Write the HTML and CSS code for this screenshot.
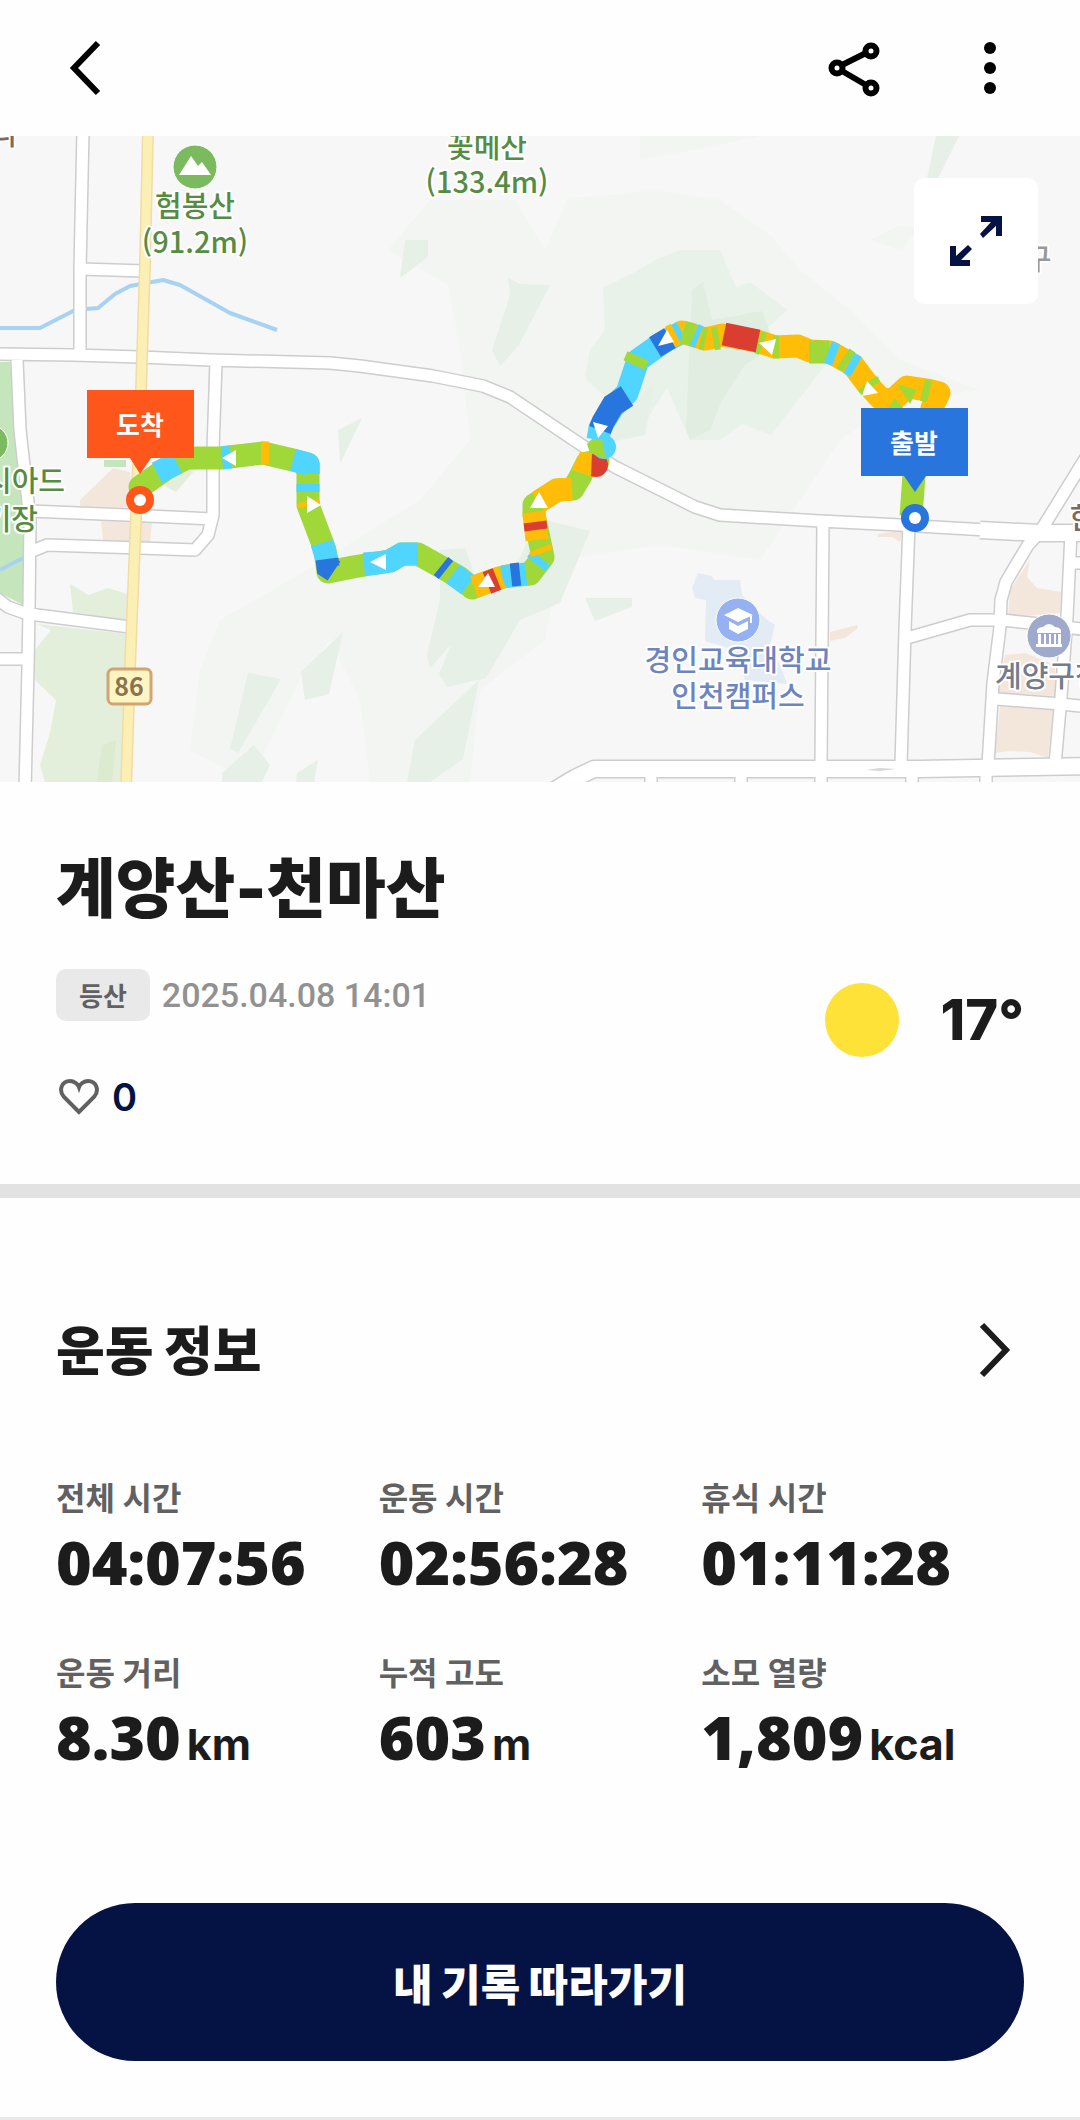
FILE: index.html
```html
<!DOCTYPE html>
<html lang="ko">
<head>
<meta charset="utf-8">
<meta name="viewport" content="width=device-width, initial-scale=1">
<title>계양산-천마산</title>
<link rel="stylesheet" href="styles.css">
</head>
<body>
<header class="topbar">
  <button class="icon-button" type="button" aria-label="뒤로">
    <svg width="60" height="60" viewBox="0 0 60 60"><path class="chevron" d="M44 5 20 30 44 55"/></svg>
  </button>
  <div class="topbar-actions">
    <button class="icon-button" type="button" aria-label="공유">
      <svg width="60" height="60" viewBox="0 0 60 60"><g class="share"><path d="M18 27 42 15M18 33 42 47"/><circle cx="13" cy="30" r="5.5"/><circle cx="47" cy="13" r="5.5"/><circle cx="47" cy="50" r="5.5"/></g></svg>
    </button>
    <button class="icon-button" type="button" aria-label="더보기">
      <svg width="60" height="60" viewBox="0 0 60 60"><circle cx="30" cy="10" r="6"/><circle cx="30" cy="30" r="6"/><circle cx="30" cy="50" r="6"/></svg>
    </button>
  </div>
</header>

<main>
  <section class="map" aria-label="이동 경로 지도">
    <svg class="map-canvas" viewBox="0 136 1080 646">
      <rect class="land" y="136" width="1080" height="646"/>
      <!-- hills -->
      <g class="hill-1">
        <path d="M430 200 515 200 545 250 568 198 615 195 655 190 720 200 770 235 800 270 850 310 900 360 980 390 900 400 870 420 840 440 760 560 660 545 560 560 545 640 480 690 470 782 370 782 360 700 330 640 300 680 250 782 190 750 200 670 220 620 290 580 420 500 470 440 460 350 448 285 388 250Z"/>
        <path d="M640 160 720 145 760 136 640 136ZM870 240 900 225 920 228 900 250Z"/>
      </g>
      <g class="hill-2">
        <path class="hill-soft" d="M603 288 635 272 655 260 680 250 720 250 736 287 750 282 787 310 765 330 826 364 771 435 742 424 720 440 690 440 667 388 640 430 585 378 590 350 605 330Z"/>
        <path d="M936 136 959 136 938 178 927 178Z"/>
        <path d="M440 550 465 548 480 590 476 620 455 640 430 668 427 655 440 600Z"/>
        <path d="M405 240 428 240 428 257 400 278ZM508 278 520 284 550 285 519 345 500 366 492 350 510 295ZM585 447 645 435 655 382 625 410Z"/>
        <path d="M538 518 590 531 560 603 520 620 486 678 447 687 439 674 462 618 470 600 505 590ZM479 680 463 759 430 782 407 782 415 740ZM585 598 632 598 632 607 595 621Z"/>
        <path d="M248 673 281 679 238 753 230 749ZM343 632 329 694 305 700 301 672ZM254 745 270 765 262 782 222 782 222 773ZM318 760 314 782 296 782 297 773ZM338 430 362 418 340 464Z"/>
      </g>
      <path class="hill-3" d="M692 290 703 282 712 320 762 311 775 346 745 365 722 400 710 430 690 440 686 430Z"/>
      <!-- parks and districts -->
      <path class="park" d="M0 362H12L16 430 23 480 23 605 0 593ZM104 460H126V467H104Z"/>
      <path class="meadow" d="M35 650 51 630 37 624 127 634 121 782 45 782 40 765 50 733 56 700 35 680ZM70 584 88 595 108 588 127 594 127 622 73 612ZM163 485 190 464 200 464 176 492Z"/>
      <path class="meadow-dark" d="M102 745 116 740 112 782 97 782Z"/>
      <path class="campus" d="M692 588 698 573 712 576 714 580H740L742 595 765 618 775 625 770 645 780 665 787 684 745 680 735 650 705 641 706 600 695 598Z"/>
      <path class="district" d="M80 500 113 468 130 472 133 508 80 506ZM101 521 152 523 150 542 103 540ZM1030 560 1027 577 1037 588 1061 592 1060 613 1008 617 1010 590ZM1000 706 1053 710 1048 758 1030 752 1010 751 995 753ZM1005 655 1025 653 1055 665 1055 696 998 693ZM878 534 903 530 900 542 892 537 878 537ZM830 632 845 628 857 625 858 628 845 638 830 641Z"/>
      <!-- river -->
      <path class="river" d="M0 328H40L75 310 98 308 115 294 130 286 163 280 180 285 230 313 277 330M0 570 23 558"/>
      <!-- roads: casing first, then surface -->
      <defs>
        <path id="roads" d="M83 130 80 270V355M81 269 145 271M0 354 73 355 140 357 210 360 330 363 360 366 433 376 483 386 510 397 583 446 615 467 695 507 720 515 820 521 900 525 987 530M17 360 20 430 30 520 29 610 28 667 25 790M216 362 213 450V515L208 535 195 550 140 548 47 545 30 552M30 511 127 515 213 519M-5 597 8 607 22 612 37 615 130 627M-5 659H28M823 522 821 765M909 525 905 630 901 765M907 638 970 620H1003L1030 623 1090 630M1093 446 1040 532 1028 545 1006 582 1001 600 1000 627 993 683 988 765M1071 533 1067 617 1061 697 1055 765M997 699 1061 704 1090 707M1074 563H1090M651 769V790M741 769V790M821 769V790M912 769V790M986 769V790"/>
        <path id="wide-roads" d="M980 530 1040 533 1090 533M545 796 575 778 594 769 860 769 920 769 1090 766"/>
      </defs>
      <use class="road-case" href="#roads"/><use class="road-case wide" href="#wide-roads"/>
      <use class="road" href="#roads"/><use class="road wide" href="#wide-roads"/>
      <path class="median" d="M866 770 880 768 896 769 880 771Z"/>
      <path class="highway-case" d="M148 130 145 263 141 390 136 517 130 667 126 790"/>
      <path class="highway" d="M148 130 145 263 141 390 136 517 130 667 126 790"/>
      <rect class="shield" x="108" y="669" width="43" height="35" rx="5"/>
      <text class="shield-text" x="129" y="696">86</text>
      <!-- places -->
      <circle class="peak" cx="195" cy="167" r="22"/>
      <path class="glyph" d="M179 175 191 156 198 166 202 162 211 175Z"/>
      <circle class="peak" cx="-10" cy="443" r="18"/>
      <circle class="school" cx="738" cy="620" r="22"/>
      <path class="glyph" d="M724 615 738 608 753 615 738 622ZM729 621 738 626 748 621V629L738 634 729 629ZM750 616H752V623H750Z"/>
      <circle class="office" cx="1049" cy="636" r="22"/>
      <path class="glyph" d="M1037 630Q1039 627 1043 627 1049 621 1055 627 1059 627 1061 630V633H1037ZM1038 634H1041V644H1038ZM1044 634H1046V644H1044ZM1049 634H1051V644H1049ZM1054 634H1056V644H1054ZM1058 634H1061V644H1058ZM1036 644H1062V647H1036Z"/>
      <g class="place green"><text x="195" y="217">험봉산</text><text x="195" y="253">(91.2m)</text><text x="487" y="158">꽃메산</text><text x="487" y="193">(133.4m)</text></g>
      <g class="place green end"><text x="65" y="492">아시아드</text><text x="38" y="530">경기장</text></g>
      <g class="place blue"><text x="738" y="671">경인교육대학교</text><text x="738" y="707">인천캠퍼스</text></g>
      <g class="place slate start"><text x="995" y="687">계양구청</text></g>
      <g class="place brown"><text x="5" y="145">다</text><text x="1083" y="529">한</text></g>
      <text class="place gray" x="1038" y="270">구</text>
      <!-- recorded track, coloured by pace -->
      <g class="track">
        <path class="g" stroke-linejoin="round" stroke-linecap="round" d="M140 487 150 480 167 468 187 458 220 458 263 453 293 460 308 464 308 505 325 550 328 572 353 567 377 563 390 561 402 554 418 554 443 568 460 578 472 588 493 580 507 576 530 574 543 557 534 515 534 505 557 490 573 489 580 477 587 463 598 461"/>
        <path class="o" stroke-linejoin="round" stroke-linecap="round" d="M682 332 705 339 723 335 757 341 775 347 798 346 810 351 830 352 853 365 868 385 881 399 893 400 907 387 927 390 939 393 932 408"/>
        <path class="c" d="M157 473 177 463M222 458 231 457M308 474V462M308 484V492M322 543 327 560M364 564 377 563 390 561 402 554 418 554M453 574 468 585M502 577 526 574M536 564 541 558"/>
        <path class="c" stroke-linejoin="round" d="M293 460 308 464 308 474"/>
        <path class="b" d="M327 559 328 567 334 571M441 566 446 570M511 575 520 574"/>
        <path class="o" d="M261 453 269 453M308 501 309 506M474 587 502 577M542 553 540 548M537 540 534 512M538 502 557 490 572 489M583 472 588 463"/>
        <path class="r" d="M487 583 497 579M536 530 535 522"/>
        <circle class="dot-r" cx="596" cy="465" r="12"/><path class="fill-o" d="M572 470 580 452 592 453 591 476Z"/>
        <path class="c" stroke-linejoin="round" d="M598 440 600 428 613 407 627 393 638 360 662 343 682 332"/>
        <circle class="dot-c" cx="604" cy="447" r="12"/><path class="fill-g" d="M587 444 592 439 602 439 606 459 590 453Z"/>
        <path class="b" d="M600 430 603 422 613 405 627 396M655 347 670 338"/>
        <path class="g" d="M634 365 638 356M683 332 694 335M701 338 706 339M713 339 719 338M758 342 763 344M773 347 779 347M809 352 829 352M843 358 849 362M867 383 871 388M932 379"/>
        <path class="o" d="M670 337 676 334"/>
        <path class="c" d="M828 352 836 355M849 363 856 367M694 335 699 337"/>
        <path class="r" d="M724 334 758 341"/>
        <path class="fill-g" d="M897 384 917 390 910 404ZM888 408 895 398 903 408ZM925 379 932 381 927 402 920 401ZM878 376 880 383 871 385Z"/>
        <path class="g" d="M914 475 911 516"/>
      </g>
      <path class="arrow" d="M222 458 236 450V466ZM307 496 321 505 307 513ZM370 562 386 554V570ZM539 492 530 508H548ZM488 573 478 587H495ZM593 422 608 426 598 438ZM667 330 658 346 674 342ZM759 343 776 339 772 355ZM867 381 878 393 862 396Z"/>
      <g class="finish"><path d="M87 390H194V458H151L140 474 130 458H87Z"/><circle cx="140" cy="500" r="14"/></g>
      <g class="begin"><path d="M861 408H968V476H926L915 492 904 476H861Z"/><circle cx="915" cy="518" r="14"/></g>
      <circle class="pin-hole" cx="140" cy="500" r="6"/><circle class="pin-hole" cx="915" cy="518" r="6"/>
      <text class="flag-text" x="140" y="435">도착</text><text class="flag-text" x="914" y="453">출발</text>
    </svg>
    <button class="expand" type="button" aria-label="지도 확대">
      <svg width="124" height="126" viewBox="0 0 124 126"><path d="M67 38H88V58H82V48L69 60 66 56 77 44H67ZM36 68H42V78L54 67 58 71 47 82H56V88H36Z"/></svg>
    </button>
  </section>

  <section class="summary">
    <h1>계양산-천마산</h1>
    <div class="summary-row">
      <div>
        <p class="meta"><span class="tag">등산</span><time datetime="2025-04-08T14:01">2025.04.08 14:01</time></p>
        <button class="like" type="button" aria-label="좋아요">
          <svg width="44" height="44" viewBox="0 0 44 44"><path d="M23 37 8 22C2 15 6 6 14 6 18 6 22 9 23 12 24 9 28 6 32 6 40 6 44 15 38 22Z"/></svg>
          <span>0</span>
        </button>
      </div>
      <p class="weather"><span class="sun"></span>17°</p>
    </div>
  </section>

  <section class="workout">
    <div class="section-head">
      <h2>운동 정보</h2>
      <button class="icon-button" type="button" aria-label="운동 정보 더보기">
        <svg width="60" height="60" viewBox="0 0 60 60"><path class="chevron dark" d="M18 3 42 28 18 53"/></svg>
      </button>
    </div>
    <dl class="stats">
      <div><dt>전체 시간</dt><dd>04:07:56</dd></div>
      <div><dt>운동 시간</dt><dd>02:56:28</dd></div>
      <div><dt>휴식 시간</dt><dd>01:11:28</dd></div>
      <div><dt>운동 거리</dt><dd>8.30<small>km</small></dd></div>
      <div><dt>누적 고도</dt><dd>603<small>m</small></dd></div>
      <div><dt>소모 열량</dt><dd>1,809<small>kcal</small></dd></div>
    </dl>
    <button class="follow" type="button">내 기록 따라가기</button>
  </section>
</main>
</body>
</html>
```
FILE: styles.css
```css
* { box-sizing: border-box; }
body, h1, h2, p, dl, dd { margin: 0; }
body {
  background: #fefefe;
  color: #1c1c1c;
  font-family: Inter, "Noto Sans CJK KR", sans-serif;
}
button { border: 0; padding: 0; background: none; color: inherit; font: inherit; cursor: pointer; }
svg { display: block; }

.topbar { display: flex; align-items: center; justify-content: space-between; height: 136px; padding: 0 60px 0 54px; }
.topbar-actions { display: flex; gap: 76px; }
.icon-button { width: 60px; height: 60px; }
.chevron { fill: none; stroke: #000; stroke-width: 6; }
.chevron.dark { stroke: #1c1c1c; }
.share { fill: none; stroke: #000; stroke-width: 6; }

/* map */
.map { position: relative; }
.map-canvas { width: 100%; height: auto; }
.land { fill: #f7f7f7; }
.hill-1 { fill: #f2f5f2; }
.hill-2 { fill: #e6f0e6; }
.hill-soft { fill: #e9f2e9; }
.hill-3 { fill: #e1ede1; }
.park { fill: #c5e6bd; }
.meadow { fill: #e3efda; }
.meadow-dark { fill: #dceacf; }
.campus { fill: #e3ebf4; }
.district { fill: #f3e7dc; }
.river { fill: none; stroke: #a8d2f2; stroke-width: 4; stroke-linejoin: round; }
.road, .road-case { fill: none; stroke-linejoin: round; stroke: #fff; stroke-width: 11; }
.road-case { stroke: #cdcdcd; stroke-width: 14; }
.road.wide { stroke-width: 16; }
.road-case.wide { stroke-width: 19; }
.median { fill: #d6d6d6; }
.highway, .highway-case { fill: none; stroke: #fcefb4; stroke-width: 9; }
.highway-case { stroke: #f0dca6; stroke-width: 12; }
.shield { fill: #fff5c3; stroke: #d0a473; stroke-width: 3; }
.shield-text { fill: #8b7350; font: 700 25px "Noto Sans CJK KR", sans-serif; text-anchor: middle; }
.peak { fill: #7cba60; stroke: #fff; stroke-width: 1; }
.school { fill: #96b1f1; stroke: #fff; stroke-width: 1; }
.office { fill: #9fa9cb; stroke: #fff; stroke-width: 1; }
.glyph { fill: #fff; }
.place { font: 500 29px "Noto Sans CJK KR", sans-serif; text-anchor: middle; paint-order: stroke; stroke: #fff; stroke-width: 4px; stroke-linejoin: round; }
.place.end { text-anchor: end; }
.place.start { text-anchor: start; }
.green { fill: #558c42; }
.blue { fill: #6d85bf; }
.slate { fill: #737b8c; }
.brown { fill: #7c6a5c; }
.gray { fill: #999; }
.track path { fill: none; stroke-width: 23; }
.track .g { stroke: #a0d83a; }
.track .c { stroke: #4fd5ff; }
.track .b { stroke: #2875de; }
.track .o { stroke: #ffbd07; }
.track .r { stroke: #da3e31; }
.track .fill-g { fill: #a0d83a; }
.track .fill-o { fill: #ffbd07; }
.dot-r { fill: #da3e31; }
.dot-c { fill: #4fd5ff; }
.arrow, .pin-hole { fill: #fff; }
.finish { fill: #ff561b; }
.begin { fill: #2875de; }
.flag-text { fill: #fff; font: 700 26px "Noto Sans CJK KR", sans-serif; text-anchor: middle; }
.expand { position: absolute; top: 42px; right: 42px; border-radius: 10px; background: #fff; fill: #051244; }

/* title and weather */
.summary { padding: 59px 56px 63px; border-bottom: 14px solid #e2e2e2; }
h1 { font-size: 65px; line-height: 96px; font-weight: 900; }
.summary-row { display: flex; justify-content: space-between; align-items: flex-start; padding-top: 32px; }
.meta { display: flex; align-items: center; gap: 12px; color: #919191; font: 500 34px/52px Roboto, sans-serif; }
.tag { padding: 0 23px; border-radius: 10px; background: #e9e9e9; color: #616161; font: 700 26px/52px "Noto Sans CJK KR", sans-serif; }
.like { display: flex; align-items: center; gap: 12px; margin-top: 52px; color: #051244; font-size: 38px; line-height: 48px; font-weight: 600; }
.like path { fill: none; stroke: #616161; stroke-width: 4; }
.weather { display: flex; align-items: center; gap: 42px; padding-top: 14px; font-size: 56px; line-height: 74px; font-weight: 800; }
.sun { width: 74px; height: 74px; border-radius: 50%; background: #ffe237; }

/* workout */
.workout { padding: 116px 56px 56px; border-bottom: 3px solid #e9e9e9; }
.section-head { display: flex; justify-content: space-between; align-items: center; }
h2 { font-size: 53px; line-height: 76px; font-weight: 900; }
.stats { display: grid; grid-template-columns: repeat(3, 1fr); padding-top: 83px; row-gap: 46px; }
dt { color: #616161; font-size: 32px; line-height: 52px; font-weight: 700; }
dd { margin-top: -3px; white-space: nowrap; font: 800 61px/80px "Open Sans", sans-serif; }
dd small { margin-left: 6px; font: 700 43px/80px Inter, sans-serif; }
.follow { width: 100%; height: 158px; margin-top: 119px; border-radius: 80px; background: #051244; color: #fff; font-size: 43px; font-weight: 900; }
```
